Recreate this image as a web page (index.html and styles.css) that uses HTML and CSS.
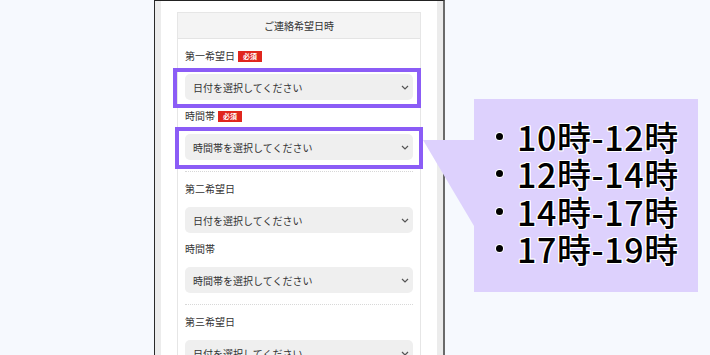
FILE: index.html
```html
<!DOCTYPE html>
<html lang="ja">
<head>
<meta charset="utf-8">
<title>ご連絡希望日時</title>
<link rel="stylesheet" href="styles.css">
</head>
<body>
<div class="stage">
  <div class="phone">
    <div class="screen">
      <section class="card">
        <div class="card-head">ご連絡希望日時</div>
        <div class="group">
          <div class="field">
            <div class="label">第一希望日<span class="req">必須</span></div>
            <div class="select hl hl-a"><span>日付を選択してください</span><svg class="chev" width="8" height="5" viewBox="0 0 8 5"><path d="M1 1l3 3 3-3" fill="none" stroke="#555" stroke-width="1.2"/></svg></div>
          </div>
          <div class="field">
            <div class="label">時間帯<span class="req">必須</span></div>
            <div class="select hl hl-b"><span>時間帯を選択してください</span><svg class="chev" width="8" height="5" viewBox="0 0 8 5"><path d="M1 1l3 3 3-3" fill="none" stroke="#555" stroke-width="1.2"/></svg></div>
          </div>
        </div>
        <div class="group">
          <div class="field">
            <div class="label">第二希望日</div>
            <div class="select"><span>日付を選択してください</span><svg class="chev" width="8" height="5" viewBox="0 0 8 5"><path d="M1 1l3 3 3-3" fill="none" stroke="#555" stroke-width="1.2"/></svg></div>
          </div>
          <div class="field">
            <div class="label">時間帯</div>
            <div class="select"><span>時間帯を選択してください</span><svg class="chev" width="8" height="5" viewBox="0 0 8 5"><path d="M1 1l3 3 3-3" fill="none" stroke="#555" stroke-width="1.2"/></svg></div>
          </div>
        </div>
        <div class="group">
          <div class="field">
            <div class="label">第三希望日</div>
            <div class="select"><span>日付を選択してください</span><svg class="chev" width="8" height="5" viewBox="0 0 8 5"><path d="M1 1l3 3 3-3" fill="none" stroke="#555" stroke-width="1.2"/></svg></div>
          </div>
        </div>
      </section>
    </div>
  </div>
  <div class="callout">
    <ul class="slots">
      <li>10時-12時</li>
      <li>12時-14時</li>
      <li>14時-17時</li>
      <li>17時-19時</li>
    </ul>
  </div>
</div>
</body>
</html>
```

FILE: styles.css
```css
* { box-sizing: border-box; }
html, body { margin: 0; padding: 0; }
body {
  background: #f6f9fe;
  font-family: "Noto Sans CJK JP", "Noto Sans", sans-serif;
  color: #333;
}
.stage {
  width: 710px;
  height: 355px;
  overflow: hidden;
  display: flex;
  align-items: flex-start;
  padding-left: 154px;
}
.phone {
  flex: none;
  width: 291px;
  height: 420px;
  border-left: 1px solid #2a2a2a;
  border-right: 2px solid #6a6a6a;
  border-top: 1px solid #222;
  background: #ececec;
  padding: 0 6px;
}
.screen {
  background: #fff;
  height: 100%;
  padding: 11px 16px 0;
}
.card {
  border: 1px solid #e6e6e6;
  border-bottom: none;
}
.card-head {
  height: 26px;
  background: #f4f4f4;
  border-bottom: 1px solid #e4e4e4;
  display: flex;
  align-items: center;
  justify-content: center;
  font-size: 10px;
  color: #333;
}
.group {
  margin: 0 7px;
  padding: 10px 0 11px;
  border-bottom: 1px dotted #d8d8d8;
}
.field + .field { margin-top: 9px; }
.label {
  display: flex;
  align-items: center;
  height: 14px;
  font-size: 10px;
  line-height: 14px;
  color: #333;
}
.req {
  display: inline-flex;
  align-items: center;
  justify-content: center;
  width: 24px;
  height: 11px;
  margin-left: 3px;
  background: #e0261e;
  color: #fff;
  font-size: 7px;
  font-weight: 700;
  line-height: 11px;
}
.select {
  margin-top: 11px;
  height: 26px;
  border-radius: 5px;
  background: #efefef;
  display: flex;
  align-items: center;
  justify-content: space-between;
  padding: 0 4px 0 8px;
  font-size: 10px;
  color: #333;
}
.chev { display: block; }
.hl { position: relative; }
.hl::after {
  content: "";
  position: absolute;
  border: 4px solid #8b5cf6;
}
.hl-a::after { left: -12px; right: -8px; top: -6px; bottom: -8px; }
.hl-b::after { left: -10px; right: -10px; top: -7px; bottom: -9px; }
.callout {
  position: relative;
  flex: none;
  margin-left: 29px;
  margin-top: 99px;
  width: 224px;
  height: 193px;
  background: #ddd1fd;
  padding: 19px 0 0 22px;
}
.callout::before {
  content: "";
  position: absolute;
  left: -51px;
  top: 41px;
  width: 51px;
  height: 86px;
  background: #ddd1fd;
  clip-path: polygon(0 0, 100% 0, 100% 100%);
}
.slots {
  list-style: none;
  margin: 0;
  padding: 0;
}
.slots li {
  display: flex;
  align-items: center;
  height: 37.3px;
  font-size: 34px;
  line-height: 37px;
  font-weight: 500;
  letter-spacing: 0.6px;
  color: #000;
  text-shadow: 1px 0 #fff, -1px 0 #fff, 0 1px #fff, 0 -1px #fff,
    1px 1px #fff, -1px -1px #fff, 1px -1px #fff, -1px 1px #fff;
}
.slots li::before {
  content: "";
  width: 7px;
  height: 7px;
  border-radius: 50%;
  background: #000;
  box-shadow: 0 0 0 1px #fff;
  margin-right: 14px;
  flex: none;
}
```
